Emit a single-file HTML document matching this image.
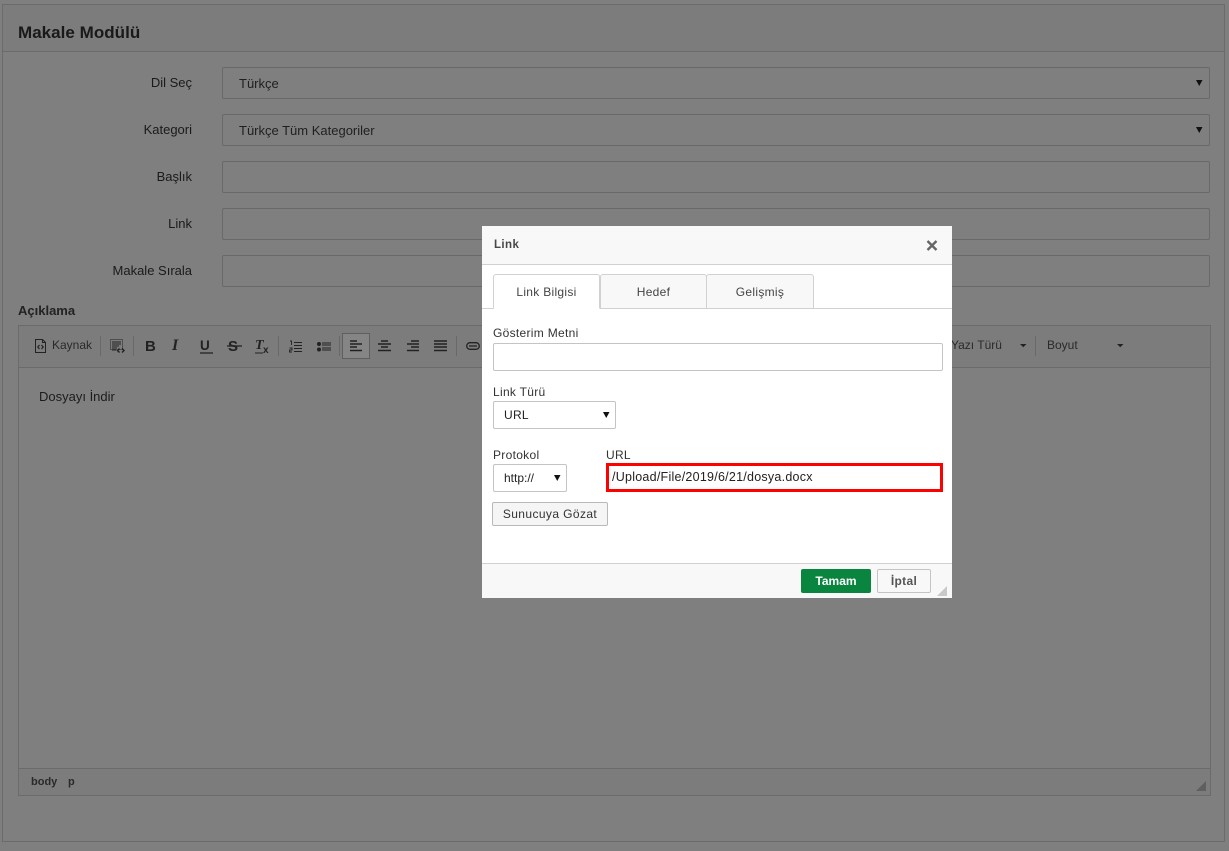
<!DOCTYPE html>
<html lang="tr"><head><meta charset="utf-8"><title>Makale Modülü</title>
<style>
html,body{margin:0;padding:0}
body{width:1229px;height:851px;overflow:hidden;position:relative;background:#7f7f7f;font-family:"Liberation Sans",sans-serif;font-size:13px;color:#222}
.a{position:absolute;box-sizing:border-box;white-space:nowrap}
.lb{left:20px;width:172px;text-align:right;font-size:13px;color:#1a1a1a}
.in{left:222px;width:988px;height:32px;border:1px solid #696969;border-radius:2px;background:#7f7f7f}
.sel{padding:8px 0 0 16px;font-size:13px;color:#1f1f1f}
.sep{position:absolute;top:336px;width:1px;height:20px;background:#696969}
svg{position:absolute;overflow:visible}
.d{font-size:12px;color:#333;letter-spacing:.3px}
.box{border:1px solid #c4c4c4;border-radius:2px;background:#fff}
.tab{top:274px;height:35px;border:1px solid #d1d1d1;border-radius:3px 3px 0 0;background:#f8f8f8;text-align:center;padding-top:10px;color:#444}
</style></head><body>
<div class="a" style="left:2px;top:4px;width:1223px;height:838px;border:1px solid #6b6b6b"></div>
<div class="a" style="left:3px;top:5px;width:1221px;height:47px;border-bottom:1px solid #6b6b6b;background:#7c7c7c"></div>
<div class="a" style="left:18px;top:23px;font-size:17px;font-weight:bold;color:#191919;letter-spacing:.03px">Makale Modülü</div>

<div class="a lb" style="top:75px">Dil Seç</div>
<div class="a in sel" style="top:67px">Türkçe</div><svg style="left:1196px;top:80px" width="7" height="6"><path d="M0 0h6.500L3.250 6z" fill="#111"/></svg>
<div class="a lb" style="top:122px">Kategori</div>
<div class="a in sel" style="top:114px">Türkçe Tüm Kategoriler</div><svg style="left:1196px;top:127px" width="7" height="6"><path d="M0 0h6.500L3.250 6z" fill="#111"/></svg>
<div class="a lb" style="top:169px">Başlık</div><div class="a in" style="top:161px"></div>
<div class="a lb" style="top:216px">Link</div><div class="a in" style="top:208px"></div>
<div class="a lb" style="top:263px">Makale Sırala</div><div class="a in" style="top:255px"></div>

<div class="a" style="left:18px;top:303px;font-size:13px;font-weight:bold;color:#222">Açıklama</div>
<div class="a" style="left:18px;top:325px;width:1193px;height:471px;border:1px solid #6b6b6b"></div>
<div class="a" style="left:19px;top:326px;width:1191px;height:42px;border-bottom:1px solid #6b6b6b;background:#7c7c7c"></div>
<div class="a" style="left:19px;top:768px;width:1191px;height:27px;border-top:1px solid #6b6b6b;background:#7c7c7c"></div>

<svg style="left:35px;top:339px" width="12" height="14" fill="none" stroke="#222"><path d="M.5 .5h7l3 3v10h-10zM7.500 .5v3h3"/><path d="M4.500 6 2.800 8l1.700 2M6.500 6l1.700 2-1.700 2" stroke-width="1.200"/></svg>
<div class="a" style="left:52px;top:338px;font-size:12px;color:#2a2a2a">Kaynak</div>
<div class="sep" style="left:100px"></div>
<svg style="left:110px;top:339px" width="15" height="15" fill="none" stroke="#222"><path d="M.5 .5h12v10h-12z" stroke-dasharray="1 1"/><path d="M2 3h9M2 5h9M2 7h7M2 9h5M2 11h4" stroke-width="1.100"/><path d="M9.500 9.500l-2 2 2 2M12 9.500l2 2-2 2" stroke-width="1.400"/></svg>
<div class="sep" style="left:133px"></div>
<div class="a" style="left:145px;top:338px;font-size:15px;font-weight:bold;color:#222">B</div>
<div class="a" style="left:172px;top:337px;font-size:16px;font-weight:bold;font-style:italic;font-family:'Liberation Serif',serif;color:#222">I</div>
<div class="a" style="left:200px;top:338px;font-size:13.500px;font-weight:bold;color:#222">U</div>
<svg style="left:200px;top:352px" width="13" height="2"><path d="M0 1h13" stroke="#222" stroke-width="1.300"/></svg>
<div class="a" style="left:228px;top:338px;font-size:15px;font-weight:bold;color:#222">S</div>
<svg style="left:227px;top:345px" width="15" height="2"><path d="M0 1h15" stroke="#222" stroke-width="1.300"/></svg>
<div class="a" style="left:255px;top:338px;font-size:14px;font-weight:bold;font-style:italic;font-family:'Liberation Serif',serif;color:#222">T</div>
<div class="a" style="left:263px;top:345px;font-size:10px;font-weight:bold;color:#222">x</div>
<svg style="left:255px;top:352px" width="9" height="2"><path d="M0 1h8" stroke="#222"/></svg>
<div class="sep" style="left:278px"></div>
<svg style="left:289px;top:340px" width="13" height="13" stroke="#222"><path d="M5 2.500h8M5 5.500h8M5 8.500h8M5 11.500h8" stroke-width=".9"/><path d="M1 1h1.500v4M.5 8h2.500v2h-2.500v2h2.500" fill="none" stroke-width=".9"/></svg>
<svg style="left:317px;top:340px" width="14" height="13" stroke="#222"><path d="M5 3h9M5 5h9M5 8h9M5 10h9" stroke-width=".9"/><circle cx="2" cy="4" r="2" fill="#222" stroke="none"/><circle cx="2" cy="9.500" r="2" fill="#222" stroke="none"/></svg>
<div class="sep" style="left:339px"></div>
<div class="a" style="left:342px;top:333px;width:28px;height:26px;border:1px solid #5f5f5f;background:#858585"></div>
<svg style="left:350px;top:340px" width="13" height="12" stroke="#222" stroke-width="1.400"><path d="M0 1h7M0 4h12M0 7h7M0 10.500h12"/></svg>
<svg style="left:378px;top:340px" width="13" height="12" stroke="#222" stroke-width="1.400"><path d="M3 1h7M0 4h13M3 7h7M0 10.500h13"/></svg>
<svg style="left:406px;top:340px" width="13" height="12" stroke="#222" stroke-width="1.400"><path d="M5 1h8M1 4h12M5 7h8M1 10.500h12"/></svg>
<svg style="left:434px;top:340px" width="13" height="12" stroke="#222" stroke-width="1.400"><path d="M0 1h13M0 4h13M0 7h13M0 10.500h13"/></svg>
<div class="sep" style="left:456px"></div>
<svg style="left:466px;top:342px" width="14" height="8" fill="none" stroke="#222" stroke-width="1.300"><rect x=".7" y=".7" width="12.600" height="6.600" rx="3.300"/><path d="M3 4h8"/></svg>

<div class="a" style="left:951px;top:338px;font-size:12px;color:#2a2a2a">Yazı Türü</div>
<svg style="left:1020px;top:344px" width="6" height="3"><path d="M0 0h6.500L3.250 3.200z" fill="#222"/></svg>
<div class="sep" style="left:1035px"></div>
<div class="a" style="left:1047px;top:338px;font-size:12px;color:#2a2a2a">Boyut</div>
<svg style="left:1117px;top:344px" width="6" height="3"><path d="M0 0h6.500L3.250 3.200z" fill="#222"/></svg>

<div class="a" style="left:39px;top:389px;font-size:13px;color:#1c1c1c">Dosyayı İndir</div>
<div class="a" style="left:31px;top:776px;font-size:11px;font-weight:bold;color:#2a2a2a">body</div>
<div class="a" style="left:68px;top:776px;font-size:11px;font-weight:bold;color:#2a2a2a">p</div>
<svg style="left:1196px;top:781px" width="11" height="11"><path d="M10 0v10H0z" fill="#5f5f5f"/></svg>

<!-- Dialog -->
<div class="a" style="left:482px;top:226px;width:470px;height:372px;background:#fff"></div>
<div class="a" style="left:482px;top:226px;width:470px;height:39px;background:#f8f8f8;border-bottom:1px solid #d1d1d1"></div>
<div class="a" style="left:494px;top:238px;font-size:11.500px;font-weight:bold;color:#484848;letter-spacing:.4px;line-height:14px">Link</div>
<svg style="left:926px;top:240px" width="12" height="11"><path d="M1.500 1l9 9M10.500 1l-9 9" stroke="#666" stroke-width="2.400"/></svg>

<div class="a" style="left:482px;top:308px;width:470px;height:1px;background:#d1d1d1"></div>
<div class="a tab d" style="left:493px;width:107px;background:#fff;border-bottom:1px solid #fff">Link Bilgisi</div>
<div class="a tab d" style="left:600px;width:107px">Hedef</div>
<div class="a tab d" style="left:706px;width:108px">Gelişmiş</div>

<div class="a d" style="left:493px;top:326px">Gösterim Metni</div>
<div class="a box" style="left:493px;top:343px;width:450px;height:28px"></div>
<div class="a d" style="left:493px;top:385px">Link Türü</div>
<div class="a box d" style="left:493px;top:401px;width:123px;height:28px;padding:6px 0 0 10px;color:#222">URL</div>
<svg style="left:603px;top:412px" width="7" height="6"><path d="M0 0h6.500L3.250 6z" fill="#111"/></svg>
<div class="a d" style="left:493px;top:448px">Protokol</div>
<div class="a box d" style="left:493px;top:464px;width:74px;height:28px;padding:6px 0 0 10px;color:#222;letter-spacing:0">http://</div>
<svg style="left:554px;top:475px" width="7" height="6"><path d="M0 0h6.500L3.250 6z" fill="#111"/></svg>
<div class="a d" style="left:606px;top:448px">URL</div>
<div class="a" style="left:606px;top:463px;width:337px;height:29px;border:3px solid #f00;background:#fff;padding:4px 0 0 3px;font-size:12.500px;color:#222;letter-spacing:.25px">/Upload/File/2019/6/21/dosya.docx</div>
<div class="a d" style="left:492px;top:502px;width:116px;height:24px;border:1px solid #b9b9b9;border-radius:2px;background:#f5f5f5;text-align:center;padding-top:4px;color:#333;letter-spacing:.4px">Sunucuya Gözat</div>

<div class="a" style="left:482px;top:563px;width:470px;height:35px;background:#f8f8f8;border-top:1px solid #d1d1d1"></div>
<div class="a" style="left:801px;top:569px;width:70px;height:24px;background:#09853f;border-radius:2px;color:#fff;font-size:12px;font-weight:bold;text-align:center;padding-top:5px">Tamam</div>
<div class="a" style="left:877px;top:569px;width:54px;height:24px;background:#f8f8f8;border:1px solid #c4c4c4;border-radius:2px;color:#555;font-size:12px;font-weight:bold;text-align:center;padding-top:4px;letter-spacing:.3px">İptal</div>
<svg style="left:937px;top:586px" width="10" height="10"><path d="M10 0v10H0z" fill="#c9c9c9"/></svg>
</body></html>
